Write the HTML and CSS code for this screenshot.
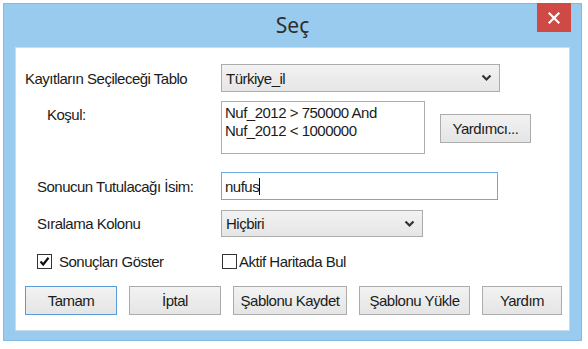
FILE: index.html
```html
<!DOCTYPE html>
<html>
<head>
<title>Seç</title>
<meta charset="utf-8">
<link rel="stylesheet" href="styles.css">
</head>
<body>
<div class="window">
   <div class="titleBar">
      <span class="title">Seç</span>
      <div class="closeButton">
         <svg width="12" height="12" viewBox="0 0 12 12"><path d="M1.5 1.5 L10.5 10.5 M10.5 1.5 L1.5 10.5" stroke="#fff" stroke-width="2.2" stroke-linecap="square"/></svg>
      </div>
   </div>
   <div class="client">
      <div class="row rowTable">
         <label class="fieldName">Kayıtların Seçileceği Tablo</label>
         <div class="combo comboWide">
            <span>Türkiye_il</span>
            <svg class="chevron" width="11" height="8" viewBox="0 0 11 8"><path d="M1.5 1.5 L5.5 5.5 L9.5 1.5" fill="none" stroke="#333" stroke-width="2.2"/></svg>
         </div>
      </div>
      <div class="row rowCondition">
         <label class="fieldName indentCondition">Koşul:</label>
         <div class="textArea">Nuf_2012 &gt; 750000 And<br>Nuf_2012 &lt; 1000000</div>
         <div class="button helperButton">Yardımcı...</div>
      </div>
      <div class="row rowName">
         <label class="fieldName indentName">Sonucun Tutulacağı İsim:</label>
         <div class="textBox">nufus<span class="caret"></span></div>
      </div>
      <div class="row rowSort">
         <label class="fieldName indentName">Sıralama Kolonu</label>
         <div class="combo comboNarrow">
            <span>Hiçbiri</span>
            <svg class="chevron" width="11" height="8" viewBox="0 0 11 8"><path d="M1.5 1.5 L5.5 5.5 L9.5 1.5" fill="none" stroke="#333" stroke-width="2.2"/></svg>
         </div>
      </div>
      <div class="row rowChecks">
         <div class="check indentCheck">
            <span class="box">
               <svg width="11" height="11" viewBox="0 0 11 11"><path d="M1.5 5.5 L4.2 8.5 L9.5 1.8" fill="none" stroke="#111" stroke-width="2.2"/></svg>
            </span>
            <span>Sonuçları Göster</span>
         </div>
         <div class="check checkRight">
            <span class="box"></span>
            <span>Aktif Haritada Bul</span>
         </div>
      </div>
      <div class="row rowButtons">
         <div class="button defaultButton" style="width:92px">Tamam</div>
         <div class="button" style="width:92px">İptal</div>
         <div class="button" style="width:114px">Şablonu Kaydet</div>
         <div class="button" style="width:111px">Şablonu Yükle</div>
         <div class="button" style="width:80px">Yardım</div>
      </div>
   </div>
</div>
</body>
</html>
```

FILE: styles.css
```css
body
{
    margin: 0;
    background: #fff;
    font-family: "Liberation Sans", Arial, sans-serif;
    font-size: 15px;
    letter-spacing: -0.5px;
    color: #1b1b1b;
}

.window
{
    position: relative;
    margin: 3px 0 0 3px;
    width: 579px;
    height: 338px;
    border: 1px solid #86b9e0;
    background: #99cbef;
    padding: 0 11px 9px 11px;
    box-sizing: border-box;
    display: flex;
    flex-direction: column;
}

.titleBar
{
    height: 43px;
    display: flex;
    align-items: center;
    justify-content: center;
}

.title
{
    font-family: "Noto Sans", "Open Sans", sans-serif;
    font-size: 21px;
    letter-spacing: 0;
    color: #2e2e2e;
    margin-top: -2px;
}

.closeButton
{
    position: absolute;
    top: -1px;
    right: 10px;
    width: 34px;
    height: 29px;
    background: #cf4a45;
    display: flex;
    align-items: center;
    justify-content: center;
}

.client
{
    flex: 1;
    background: #fff;
    border: 1px solid #c9dcec;
    display: flex;
    flex-direction: column;
}

.row
{
    display: flex;
    align-items: center;
}

.fieldName
{
    width: 196px;
    padding-left: 9px;
    flex: none;
}

.indentCondition
{
    padding-left: 31px;
    width: 174px;
    align-self: flex-start;
    margin-top: 5px;
}

.indentName
{
    padding-left: 21px;
    width: 184px;
}

.rowTable
{
    margin-top: 16px;
}

.rowCondition
{
    margin-top: 9px;
    align-items: flex-start;
}

.rowName
{
    margin-top: 18px;
}

.rowSort
{
    margin-top: 10px;
}

.rowChecks
{
    margin-top: 16px;
}

.rowButtons
{
    margin-top: 16px;
    padding-left: 9px;
    gap: 12px;
}

.combo
{
    height: 28px;
    box-sizing: border-box;
    border: 1px solid #acacac;
    background: linear-gradient(#f2f2f2, #e6e6e6);
    display: flex;
    align-items: center;
    justify-content: space-between;
    padding: 0 7px 0 4px;
}

.comboWide
{
    width: 279px;
}

.comboNarrow
{
    width: 202px;
    height: 27px;
}

.textArea
{
    width: 204px;
    height: 53px;
    box-sizing: border-box;
    border: 1px solid #abadb3;
    padding: 2px 3px;
    line-height: 18px;
}

.helperButton
{
    margin-left: 15px;
    margin-top: 13px;
    width: 91px;
}

.textBox
{
    width: 277px;
    height: 28px;
    box-sizing: border-box;
    border: 1px solid #6fa8dc;
    display: flex;
    align-items: center;
    padding-left: 3px;
}

.caret
{
    display: inline-block;
    width: 1px;
    height: 17px;
    background: #000;
}

.button
{
    height: 29px;
    box-sizing: border-box;
    border: 1px solid #acacac;
    background: linear-gradient(#f2f2f2, #e5e5e5);
    display: flex;
    align-items: center;
    justify-content: center;
}

.defaultButton
{
    border: 1px solid #5a9ad8;
}

.check
{
    display: flex;
    align-items: center;
    gap: 7px;
}

.indentCheck
{
    margin-left: 21px;
    width: 185px;
}

.box
{
    width: 15px;
    height: 15px;
    box-sizing: border-box;
    border: 1px solid #333;
    background: #fff;
    display: flex;
    align-items: center;
    justify-content: center;
}

.checkRight
{
    gap: 2px;
}
```
